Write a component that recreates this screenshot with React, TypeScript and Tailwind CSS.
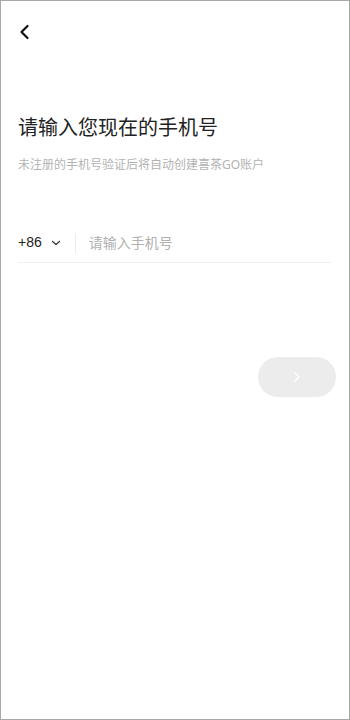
import React from 'react';

export default function App() {
  return (
    <div
      className="w-[350px] h-[720px] bg-white border border-[#a8a8a8] box-border flex flex-col"
      style={{ fontFamily: '"Noto Sans", "Noto Sans CJK SC", sans-serif' }}
    >
      {/* Back */}
      <div className="pl-[17px] pt-[22px] h-[60px]">
        <svg width="14" height="18" viewBox="0 0 14 18" fill="none">
          <path d="M9.5 3 L3.5 9 L9.5 15" stroke="#111" strokeWidth="2.2" strokeLinecap="round" strokeLinejoin="round" />
        </svg>
      </div>

      {/* Heading */}
      <div className="px-[17px] mt-[53px]">
        <h1 className="text-[20px] leading-[28px] text-[#222] font-normal">请输入您现在的手机号</h1>
        <p className="mt-[15px] text-[12px] leading-[16px] text-[#b3b3b3]">未注册的手机号验证后将自动创建喜茶GO账户</p>
      </div>

      {/* Phone input */}
      <div className="mx-[17px] mt-[50px] h-[40px] flex items-center border-b border-[#f0f0f0]">
        <div className="flex items-center gap-[9px] pr-[14px]">
          <span className="text-[14px] text-[#222]" style={{ fontFamily: '"Liberation Sans", sans-serif' }}>+86</span>
          <svg width="10" height="8" viewBox="0 0 10 8" fill="none">
            <path d="M1.5 2.5 L5 5.5 L8.5 2.5" stroke="#333" strokeWidth="1.2" strokeLinecap="round" strokeLinejoin="round" />
          </svg>
        </div>
        <div className="w-px h-[20px] bg-[#ececec]" />
        <span className="ml-[13px] text-[14px] text-[#b0b0b0]">请输入手机号</span>
      </div>

      {/* Next button */}
      <div className="flex justify-end pr-[13px] mt-[94px]">
        <button className="w-[78px] h-[40px] rounded-full bg-[#ececec] flex items-center justify-center">
          <svg width="8" height="12" viewBox="0 0 8 12" fill="none">
            <path d="M2 2 L6 6 L2 10" stroke="#ffffff" strokeWidth="1.5" strokeLinecap="round" strokeLinejoin="round" />
          </svg>
        </button>
      </div>
    </div>
  );
}
